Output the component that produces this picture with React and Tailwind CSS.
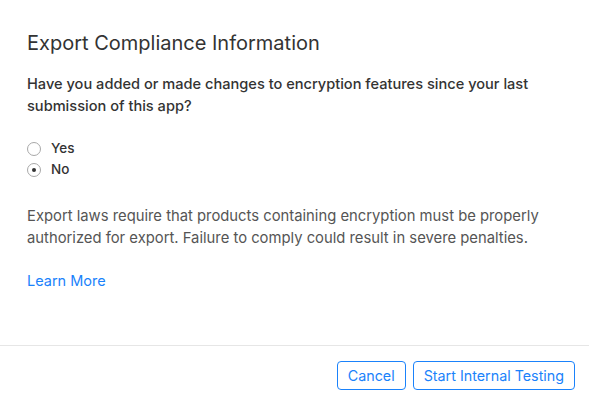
export default function App() {
  return (
    <div className="w-[589px] h-[401px] bg-white flex flex-col font-['Inter',sans-serif] overflow-hidden">
      <div className="flex-1 px-[27px] pt-[31px]">
        <h1 className="text-[20px] leading-[24px] text-[#333] font-normal">Export Compliance Information</h1>

        <p className="mt-[18px] text-[14.6px] leading-[22px] font-medium text-[#333]">
          Have you added or made changes to encryption features since your last submission of this app?
        </p>

        <div className="mt-[24px] flex flex-col gap-[6px]">
          <Radio label="Yes" />
          <Radio label="No" checked />
        </div>

        <p className="mt-[28px] text-[14.8px] leading-[22px] text-[#555]">
          Export laws require that products containing encryption must be properly authorized for export. Failure to comply could result in severe penalties.
        </p>

        <a className="mt-[21px] block text-[14.5px] leading-[22px] text-[#1a82fb]">Learn More</a>
      </div>

      <div className="border-t border-[#e6e6e6] h-[56px] flex items-start justify-end gap-[7px] pr-[14px] pt-[15px]">
        <button className="h-[29px] px-[10px] rounded-[4px] border border-[#1a82fb] text-[#1a82fb] text-[14.3px]">Cancel</button>
        <button className="h-[29px] px-[10px] rounded-[4px] border border-[#1a82fb] text-[#1a82fb] text-[14.3px]">Start Internal Testing</button>
      </div>
    </div>
  );
}

function Radio({ label, checked = false }) {
  return (
    <div className="flex items-center gap-[10px] h-[15px]">
      <span className="w-[14px] h-[14px] rounded-full border border-[#a8a8a8] flex items-center justify-center bg-white">
        {checked && <span className="w-[4px] h-[4px] rounded-full bg-[#333]" />}
      </span>
      <span className="text-[13.5px] font-medium text-[#333]">{label}</span>
    </div>
  );
}
